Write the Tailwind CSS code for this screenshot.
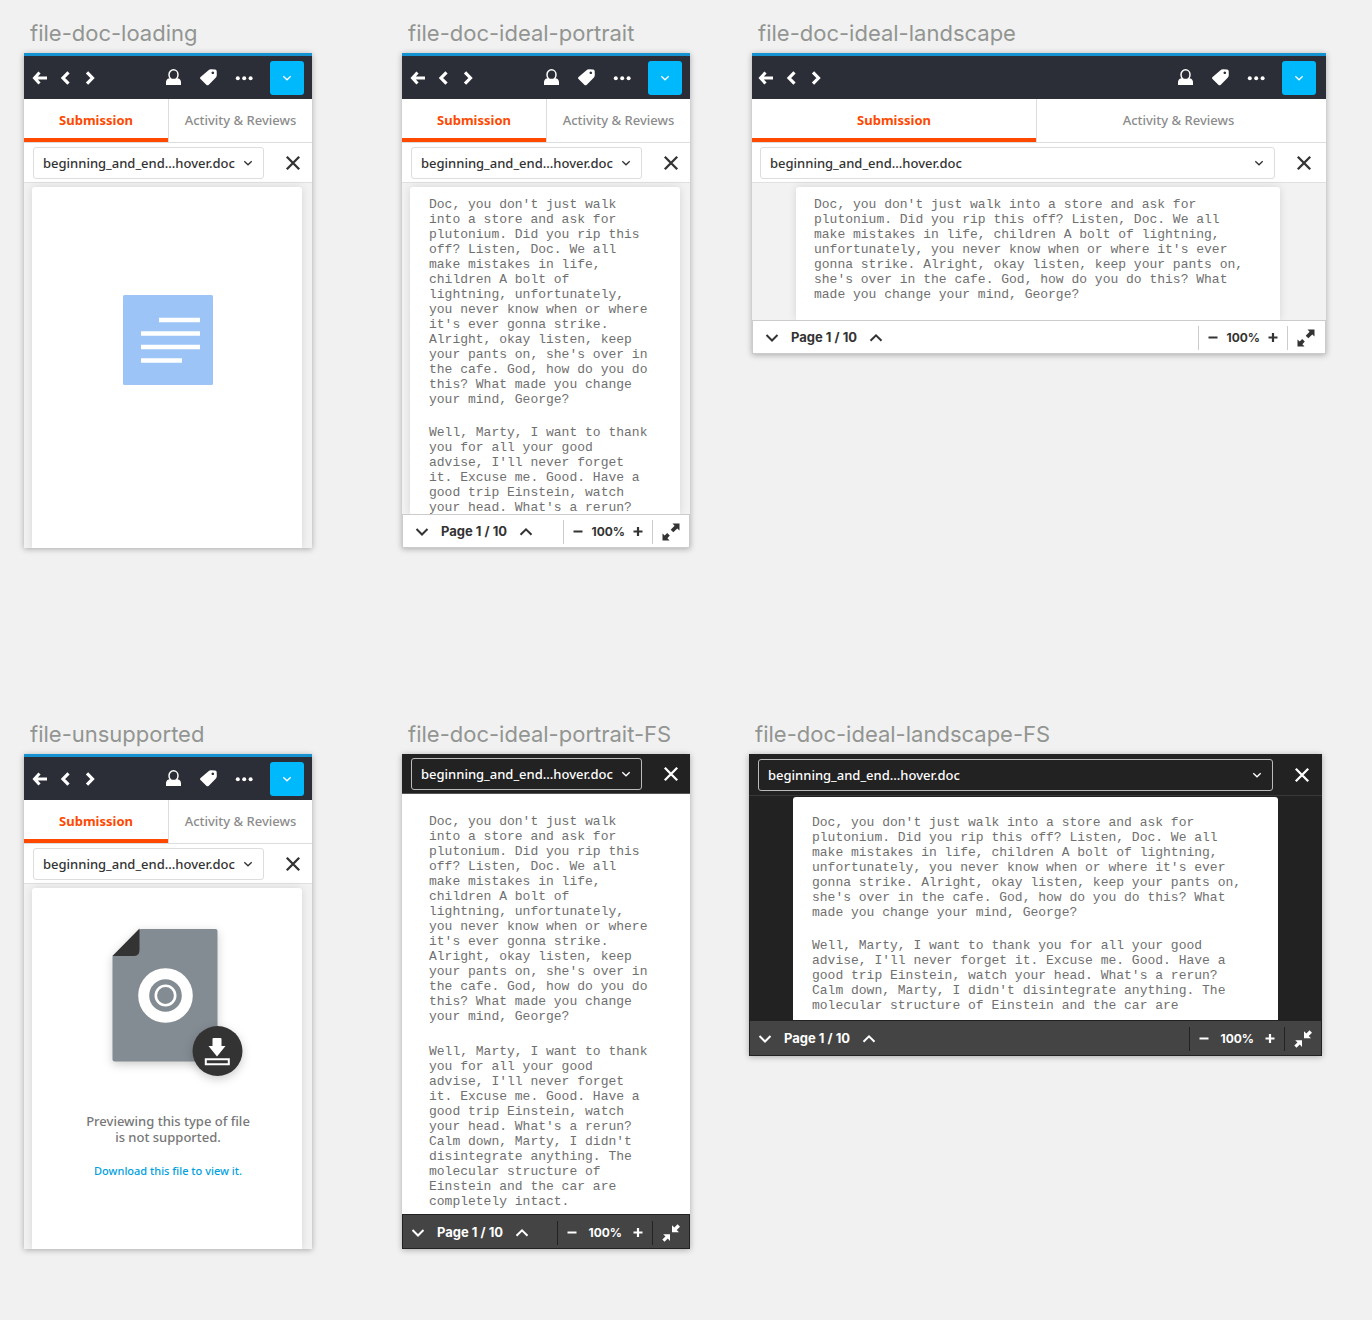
<!DOCTYPE html>
<html lang="en">
<head>
<meta charset="utf-8">
<meta name="viewport" content="width=device-width, initial-scale=1">
<title>Document viewer states</title>
<script src="https://cdn.jsdelivr.net/npm/@tailwindcss/browser@4"></script>
</head>
<body class="min-h-screen bg-[#f1f1f1] pt-5 pb-10 font-['Noto_Sans',sans-serif] text-[13px] text-[#333]">

<!-- Shared icons -->
<svg class="hidden" aria-hidden="true">
  <symbol id="back" viewBox="0 0 16 16"><path d="M7.5 2.5 2.5 8l5 5.500M3 8h12" fill="none" stroke="currentColor" stroke-width="3"/></symbol>
  <symbol id="prev" viewBox="0 0 16 16"><path d="M11.500 2.300 6 8l5.500 5.700" fill="none" stroke="currentColor" stroke-width="3.200"/></symbol>
  <symbol id="next" viewBox="0 0 16 16"><path d="M5 2.300 10.500 8 5 13.700" fill="none" stroke="currentColor" stroke-width="3.200"/></symbol>
  <symbol id="person" viewBox="0 0 18 18"><path d="M8.500 9.500c2 0 4.500-.9 6.500 1 .8.8 1 1.900 1 3V16H1v-2.500c0-1.100.2-2.200 1-3 2-1.900 4.500-1 6.500-1Z" fill="currentColor"/><ellipse cx="8.500" cy="5.700" rx="4.500" ry="4.900" fill="#2b2d37" stroke="currentColor" stroke-width="1.500"/></symbol>
  <symbol id="tag" viewBox="0 0 18 18"><path fill-rule="evenodd" fill="currentColor" d="M8.200 1.500Q9.500.3 11 .3L15.100.5Q16.700.7 16.700 2.200L16.800 6Q16.800 7.500 15.700 8.700L8.800 15.700Q7.500 16.800 6.300 15.700L.5 10.100Q-.5 9 .6 8.100ZM12.800 2.500a1.300 1.300 0 1 0 .01 0Z"/></symbol>
  <symbol id="dots" viewBox="0 0 18 18"><g fill="currentColor"><circle cx="2.800" cy="9.300" r="2"/><circle cx="9.200" cy="9.300" r="2"/><circle cx="15.600" cy="9.300" r="2"/></g></symbol>
  <symbol id="caret" viewBox="0 0 10 10"><path d="M1.300 3.200 5 6.800l3.700-3.600" fill="none" stroke="currentColor" stroke-width="1.300"/></symbol>
  <symbol id="close" viewBox="0 0 16 16"><path d="m1.800 1.800 12.400 12.400M14.200 1.800 1.800 14.200" fill="none" stroke="currentColor" stroke-width="2.300"/></symbol>
  <symbol id="down" viewBox="0 0 14 14"><path d="m1.500 4 5.500 5.500L12.500 4" fill="none" stroke="currentColor" stroke-width="2"/></symbol>
  <symbol id="up" viewBox="0 0 14 14"><path d="M1.500 9.800 7 4.300l5.500 5.500" fill="none" stroke="currentColor" stroke-width="2"/></symbol>
  <symbol id="minus" viewBox="0 0 12 12"><path d="M1.500 5.500h9" stroke="currentColor" stroke-width="2"/></symbol>
  <symbol id="plus" viewBox="0 0 12 12"><path d="M1.500 5.500h9M6 1v9" stroke="currentColor" stroke-width="2.200"/></symbol>
  <symbol id="expand" viewBox="0 0 18 18"><path fill="currentColor" d="M10.500.5h7V7.500l-2.200-1.900-4 3.700-2.600-2.600 3.900-3.900ZM7.500 17.500H.5v-7l2.200 1.900L5.200 10l2.600 2.600-2.400 2.600Z"/></symbol>
  <symbol id="collapse" viewBox="0 0 18 18"><path fill="currentColor" d="M10 1.200v7h7L14.700 6 18 2.700 15.600.3l-3.300 3.200ZM8 10.200H1.200l2.300 2.200-3.200 3.200 2.200 2.200 3.300-3.200L8 17Z"/></symbol>
</svg>

<main class="flex flex-col gap-[173px]">

<!-- Default views -->
<div class="flex items-start pl-6 pr-[46px]">

  <section class="w-72 shrink-0">
    <h2 class="mb-[7px] pl-1.5 font-[Inter,sans-serif] text-[22px] leading-[26px] whitespace-nowrap text-[#929591]">file-doc-loading</h2>
    <div class="flex h-[495px] flex-col overflow-hidden bg-[#f2f2f2] shadow-[0_1px_6px_rgba(0,0,0,0.3)]">
      <header class="flex h-[46px] shrink-0 items-center justify-between border-t-3 border-[#1593d0] bg-[#2b2d37] px-2 text-white">
        <nav class="flex items-center gap-[9px]">
          <button aria-label="Back"><svg class="size-4"><use href="#back"/></svg></button>
          <button aria-label="Previous"><svg class="size-4"><use href="#prev"/></svg></button>
          <button aria-label="Next"><svg class="size-4"><use href="#next"/></svg></button>
        </nav>
        <div class="flex items-center gap-[17px]">
          <button aria-label="Student"><svg class="size-[18px]"><use href="#person"/></svg></button>
          <button aria-label="Tags"><svg class="size-[18px]"><use href="#tag"/></svg></button>
          <button aria-label="More"><svg class="size-[18px]"><use href="#dots"/></svg></button>
          <button aria-label="Open panel" class="flex size-[34px] items-center justify-center rounded-[3px] bg-[#00b8fc]"><svg class="size-2.5"><use href="#caret"/></svg></button>
        </div>
      </header>
      <div class="grid h-11 shrink-0 grid-cols-2 border-b border-[#ddd] bg-white">
        <button class="border-b-4 border-[#ff4800] pt-1 font-bold text-[#ff4800]">Submission</button>
        <button class="border-l border-[#ddd] font-medium text-[#8c8c8c]">Activity &amp; Reviews</button>
      </div>
      <div class="flex h-10 shrink-0 items-center border-b border-[#e0e0e0] bg-white pr-[11px] pl-[9px]">
        <div class="relative mr-[21px] flex-1">
          <select aria-label="File" class="block h-8 w-full appearance-none rounded-[3px] border border-[#ddd] bg-transparent pt-[3px] pl-[9px] font-medium"><option>beginning_and_end...hover.doc</option></select>
          <svg class="pointer-events-none absolute top-[11px] right-[11px] size-2.5"><use href="#caret"/></svg>
        </div>
        <button aria-label="Close"><svg class="size-4"><use href="#close"/></svg></button>
      </div>
      <div class="mt-1 mr-[10px] ml-2 flex flex-1 justify-center rounded-t-[3px] bg-white pt-[108px] pl-0.5 shadow-[0_0_8px_rgba(0,0,0,0.12)]">
        <svg class="size-[90px]" viewBox="0 0 90 90" role="img" aria-label="Loading document"><rect width="90" height="90" rx="1.500" fill="#9dc4f7"/><path d="M36 25h41M18 38.500h59M18 52h59M18 65.500h41" stroke="#fff" stroke-width="4.500"/></svg>
      </div>
    </div>
  </section>

  <section class="ml-[90px] w-72 shrink-0">
    <h2 class="mb-[7px] pl-1.5 font-[Inter,sans-serif] text-[22px] leading-[26px] whitespace-nowrap text-[#929591]">file-doc-ideal-portrait</h2>
    <div class="flex h-[495px] flex-col overflow-hidden bg-[#f2f2f2] shadow-[0_1px_6px_rgba(0,0,0,0.3)]">
      <header class="flex h-[46px] shrink-0 items-center justify-between border-t-3 border-[#1593d0] bg-[#2b2d37] px-2 text-white">
        <nav class="flex items-center gap-[9px]">
          <button aria-label="Back"><svg class="size-4"><use href="#back"/></svg></button>
          <button aria-label="Previous"><svg class="size-4"><use href="#prev"/></svg></button>
          <button aria-label="Next"><svg class="size-4"><use href="#next"/></svg></button>
        </nav>
        <div class="flex items-center gap-[17px]">
          <button aria-label="Student"><svg class="size-[18px]"><use href="#person"/></svg></button>
          <button aria-label="Tags"><svg class="size-[18px]"><use href="#tag"/></svg></button>
          <button aria-label="More"><svg class="size-[18px]"><use href="#dots"/></svg></button>
          <button aria-label="Open panel" class="flex size-[34px] items-center justify-center rounded-[3px] bg-[#00b8fc]"><svg class="size-2.5"><use href="#caret"/></svg></button>
        </div>
      </header>
      <div class="grid h-11 shrink-0 grid-cols-2 border-b border-[#ddd] bg-white">
        <button class="border-b-4 border-[#ff4800] pt-1 font-bold text-[#ff4800]">Submission</button>
        <button class="border-l border-[#ddd] font-medium text-[#8c8c8c]">Activity &amp; Reviews</button>
      </div>
      <div class="flex h-10 shrink-0 items-center border-b border-[#e0e0e0] bg-white pr-[11px] pl-[9px]">
        <div class="relative mr-[21px] flex-1">
          <select aria-label="File" class="block h-8 w-full appearance-none rounded-[3px] border border-[#ddd] bg-transparent pt-[3px] pl-[9px] font-medium"><option>beginning_and_end...hover.doc</option></select>
          <svg class="pointer-events-none absolute top-[11px] right-[11px] size-2.5"><use href="#caret"/></svg>
        </div>
        <button aria-label="Close"><svg class="size-4"><use href="#close"/></svg></button>
      </div>
      <article class="mt-1 mr-[10px] ml-2 min-h-0 flex-1 overflow-hidden rounded-t-[3px] bg-white pt-2.5 pl-[19px] font-['Liberation_Mono',monospace] leading-[15px] text-[#707070] shadow-[0_0_8px_rgba(0,0,0,0.12)]">
        <p>Doc, you don't just walk<br>into a store and ask for<br>plutonium. Did you rip this<br>off? Listen, Doc. We all<br>make mistakes in life,<br>children A bolt of<br>lightning, unfortunately,<br>you never know when or where<br>it's ever gonna strike.<br>Alright, okay listen, keep<br>your pants on, she's over in<br>the cafe. God, how do you do<br>this? What made you change<br>your mind, George?</p>
        <p class="mt-[18px]">Well, Marty, I want to thank<br>you for all your good<br>advise, I'll never forget<br>it. Excuse me. Good. Have a<br>good trip Einstein, watch<br>your head. What's a rerun?</p>
      </article>
      <footer class="flex h-[34px] shrink-0 items-center justify-between border border-[#ccc] bg-white pt-0.5 pr-[9px] pl-3 font-[Inter,sans-serif] font-bold">
        <div class="flex items-center gap-3">
          <button aria-label="Next page"><svg class="size-3.5"><use href="#down"/></svg></button>
          <span>Page 1 / 10</span>
          <button aria-label="Previous page"><svg class="size-3.5"><use href="#up"/></svg></button>
        </div>
        <div class="flex items-center">
          <div class="flex h-6 items-center gap-[7px] border-x border-[#ccc] px-2">
            <button aria-label="Zoom out"><svg class="size-3"><use href="#minus"/></svg></button>
            <span class="text-[12px]">100%</span>
            <button aria-label="Zoom in"><svg class="size-3"><use href="#plus"/></svg></button>
          </div>
          <button aria-label="Full screen" class="ml-[9px]"><svg class="size-[18px]"><use href="#expand"/></svg></button>
        </div>
      </footer>
    </div>
  </section>

  <section class="ml-[62px] min-w-0 flex-1">
    <h2 class="mb-[7px] pl-1.5 font-[Inter,sans-serif] text-[22px] leading-[26px] whitespace-nowrap text-[#929591]">file-doc-ideal-landscape</h2>
    <div class="flex h-[301px] flex-col overflow-hidden bg-[#f2f2f2] shadow-[0_1px_6px_rgba(0,0,0,0.3)]">
      <header class="flex h-[46px] shrink-0 items-center justify-between border-t-3 border-[#1593d0] bg-[#2b2d37] pr-[10px] pl-1.5 text-white">
        <nav class="flex items-center gap-[9px]">
          <button aria-label="Back"><svg class="size-4"><use href="#back"/></svg></button>
          <button aria-label="Previous"><svg class="size-4"><use href="#prev"/></svg></button>
          <button aria-label="Next"><svg class="size-4"><use href="#next"/></svg></button>
        </nav>
        <div class="flex items-center gap-[17px]">
          <button aria-label="Student"><svg class="size-[18px]"><use href="#person"/></svg></button>
          <button aria-label="Tags"><svg class="size-[18px]"><use href="#tag"/></svg></button>
          <button aria-label="More"><svg class="size-[18px]"><use href="#dots"/></svg></button>
          <button aria-label="Open panel" class="flex size-[34px] items-center justify-center rounded-[3px] bg-[#00b8fc]"><svg class="size-2.5"><use href="#caret"/></svg></button>
        </div>
      </header>
      <div class="grid h-11 shrink-0 grid-cols-[284fr_290fr] border-b border-[#ddd] bg-white">
        <button class="border-b-4 border-[#ff4800] pt-1 font-bold text-[#ff4800]">Submission</button>
        <button class="border-l border-[#ddd] pr-1.5 font-medium text-[#8c8c8c]">Activity &amp; Reviews</button>
      </div>
      <div class="flex h-10 shrink-0 items-center border-b border-[#e0e0e0] bg-white pr-[14px] pl-2">
        <div class="relative mr-[21px] flex-1">
          <select aria-label="File" class="block h-8 w-full appearance-none rounded-[3px] border border-[#ddd] bg-transparent pt-[3px] pl-[9px] font-medium"><option>beginning_and_end...hover.doc</option></select>
          <svg class="pointer-events-none absolute top-[11px] right-[11px] size-2.5"><use href="#caret"/></svg>
        </div>
        <button aria-label="Close"><svg class="size-4"><use href="#close"/></svg></button>
      </div>
      <article class="mt-1 mr-[46px] ml-11 min-h-0 flex-1 overflow-hidden rounded-t-[3px] bg-white pt-2.5 pl-[18px] font-['Liberation_Mono',monospace] leading-[15px] text-[#707070] shadow-[0_0_8px_rgba(0,0,0,0.12)]">
        <p>Doc, you don't just walk into a store and ask for<br>plutonium. Did you rip this off? Listen, Doc. We all<br>make mistakes in life, children A bolt of lightning,<br>unfortunately, you never know when or where it's ever<br>gonna strike. Alright, okay listen, keep your pants on,<br>she's over in the cafe. God, how do you do this? What<br>made you change your mind, George?</p>
      </article>
      <footer class="flex h-[34px] shrink-0 items-center justify-between border border-[#ccc] bg-white pt-0.5 pr-[10px] pl-3 font-[Inter,sans-serif] font-bold">
        <div class="flex items-center gap-3">
          <button aria-label="Next page"><svg class="size-3.5"><use href="#down"/></svg></button>
          <span>Page 1 / 10</span>
          <button aria-label="Previous page"><svg class="size-3.5"><use href="#up"/></svg></button>
        </div>
        <div class="flex items-center">
          <div class="flex h-6 items-center gap-[7px] border-x border-[#ccc] px-2">
            <button aria-label="Zoom out"><svg class="size-3"><use href="#minus"/></svg></button>
            <span class="text-[12px]">100%</span>
            <button aria-label="Zoom in"><svg class="size-3"><use href="#plus"/></svg></button>
          </div>
          <button aria-label="Full screen" class="ml-[9px]"><svg class="size-[18px]"><use href="#expand"/></svg></button>
        </div>
      </footer>
    </div>
  </section>
</div>

<!-- Unsupported file and full-screen views -->
<div class="flex items-start pl-6 pr-[50px]">

  <section class="w-72 shrink-0">
    <h2 class="mb-[7px] pl-1.5 font-[Inter,sans-serif] text-[22px] leading-[26px] whitespace-nowrap text-[#929591]">file-unsupported</h2>
    <div class="flex h-[495px] flex-col overflow-hidden bg-[#f2f2f2] shadow-[0_1px_6px_rgba(0,0,0,0.3)]">
      <header class="flex h-[46px] shrink-0 items-center justify-between border-t-3 border-[#1593d0] bg-[#2b2d37] px-2 text-white">
        <nav class="flex items-center gap-[9px]">
          <button aria-label="Back"><svg class="size-4"><use href="#back"/></svg></button>
          <button aria-label="Previous"><svg class="size-4"><use href="#prev"/></svg></button>
          <button aria-label="Next"><svg class="size-4"><use href="#next"/></svg></button>
        </nav>
        <div class="flex items-center gap-[17px]">
          <button aria-label="Student"><svg class="size-[18px]"><use href="#person"/></svg></button>
          <button aria-label="Tags"><svg class="size-[18px]"><use href="#tag"/></svg></button>
          <button aria-label="More"><svg class="size-[18px]"><use href="#dots"/></svg></button>
          <button aria-label="Open panel" class="flex size-[34px] items-center justify-center rounded-[3px] bg-[#00b8fc]"><svg class="size-2.5"><use href="#caret"/></svg></button>
        </div>
      </header>
      <div class="grid h-11 shrink-0 grid-cols-2 border-b border-[#ddd] bg-white">
        <button class="border-b-4 border-[#ff4800] pt-1 font-bold text-[#ff4800]">Submission</button>
        <button class="border-l border-[#ddd] font-medium text-[#8c8c8c]">Activity &amp; Reviews</button>
      </div>
      <div class="flex h-10 shrink-0 items-center border-b border-[#e0e0e0] bg-white pr-[11px] pl-[9px]">
        <div class="relative mr-[21px] flex-1">
          <select aria-label="File" class="block h-8 w-full appearance-none rounded-[3px] border border-[#ddd] bg-transparent pt-[3px] pl-[9px] font-medium"><option>beginning_and_end...hover.doc</option></select>
          <svg class="pointer-events-none absolute top-[11px] right-[11px] size-2.5"><use href="#caret"/></svg>
        </div>
        <button aria-label="Close"><svg class="size-4"><use href="#close"/></svg></button>
      </div>
      <div class="mt-1 mr-[10px] ml-2 flex flex-1 flex-col items-center rounded-t-[3px] bg-white pt-10 pl-0.5 text-center shadow-[0_0_8px_rgba(0,0,0,0.12)]">
        <svg class="ml-[18px] h-[148px] w-[131px] overflow-visible" viewBox="0 0 131 148" role="img" aria-label="Unsupported file">
          <g class="drop-shadow-[0_3px_5px_rgba(0,0,0,0.2)]">
            <path d="M27.500 1.500 29 1h74.500q2 0 2 2v128.500q0 2-2 2H2.500q-2 0-2-2V28Z" fill="#848c93"/>
            <path d="M.5 28 27.500.5V22q0 6-6 6Z" fill="#333"/>
          </g>
          <circle cx="53.500" cy="67.500" r="21.800" fill="none" stroke="#fff" stroke-width="11"/>
          <circle cx="53.500" cy="67.500" r="9.700" fill="none" stroke="#fff" stroke-width="2.600"/>
          <g class="drop-shadow-[0_3px_5px_rgba(0,0,0,0.2)]"><circle cx="105.500" cy="123" r="25" fill="#333"/></g>
          <path d="M100.500 111q0-1 1-1h7q1 0 1 1v7h4l-8.500 10.500L96.500 118h4Z" fill="#fff"/>
          <path d="M93.800 131.300h23v5h-23Z" fill="none" stroke="#fff" stroke-width="2"/>
        </svg>
        <p class="mt-[37px] leading-4 font-medium text-[#777]">Previewing this type of file<br>is not supported.</p>
        <a href="#" class="mt-[18px] text-[11px] leading-4 font-medium text-[#009fe0]">Download this file to view it.</a>
      </div>
    </div>
  </section>

  <section class="ml-[90px] w-72 shrink-0">
    <h2 class="mb-[7px] pl-1.5 font-[Inter,sans-serif] text-[22px] leading-[26px] whitespace-nowrap text-[#929591]">file-doc-ideal-portrait-FS</h2>
    <div class="flex h-[495px] flex-col overflow-hidden bg-white shadow-[0_1px_6px_rgba(0,0,0,0.3)]">
      <div class="flex h-10 shrink-0 items-center border-b border-[#555] bg-[#222] pr-[11px] pl-[9px] text-white">
        <div class="relative mr-[21px] flex-1">
          <select aria-label="File" class="block h-8 w-full appearance-none rounded-[3px] border border-[#bbb] bg-transparent pt-[3px] pl-[9px] font-medium"><option>beginning_and_end...hover.doc</option></select>
          <svg class="pointer-events-none absolute top-[11px] right-[11px] size-2.5"><use href="#caret"/></svg>
        </div>
        <button aria-label="Close"><svg class="size-4"><use href="#close"/></svg></button>
      </div>
      <article class="min-h-0 flex-1 overflow-hidden pt-5 pl-[27px] font-['Liberation_Mono',monospace] leading-[15px] text-[#707070]">
        <p>Doc, you don't just walk<br>into a store and ask for<br>plutonium. Did you rip this<br>off? Listen, Doc. We all<br>make mistakes in life,<br>children A bolt of<br>lightning, unfortunately,<br>you never know when or where<br>it's ever gonna strike.<br>Alright, okay listen, keep<br>your pants on, she's over in<br>the cafe. God, how do you do<br>this? What made you change<br>your mind, George?</p>
        <p class="mt-5">Well, Marty, I want to thank<br>you for all your good<br>advise, I'll never forget<br>it. Excuse me. Good. Have a<br>good trip Einstein, watch<br>your head. What's a rerun?<br>Calm down, Marty, I didn't<br>disintegrate anything. The<br>molecular structure of<br>Einstein and the car are<br>completely intact.</p>
      </article>
      <footer class="flex h-[35px] shrink-0 items-center justify-between border border-[#222] bg-[#444] pt-0.5 pr-[9px] pl-2 font-[Inter,sans-serif] font-bold text-white">
        <div class="flex items-center gap-3">
          <button aria-label="Next page"><svg class="size-3.5"><use href="#down"/></svg></button>
          <span>Page 1 / 10</span>
          <button aria-label="Previous page"><svg class="size-3.5"><use href="#up"/></svg></button>
        </div>
        <div class="flex items-center">
          <div class="flex h-6 items-center gap-[10px] border-x border-[#222] px-2">
            <button aria-label="Zoom out"><svg class="size-3"><use href="#minus"/></svg></button>
            <span class="text-[12px]">100%</span>
            <button aria-label="Zoom in"><svg class="size-3"><use href="#plus"/></svg></button>
          </div>
          <button aria-label="Exit full screen" class="ml-[9px]"><svg class="size-[18px]"><use href="#collapse"/></svg></button>
        </div>
      </footer>
    </div>
  </section>

  <section class="ml-[59px] min-w-0 flex-1">
    <h2 class="mb-[7px] pl-1.5 font-[Inter,sans-serif] text-[22px] leading-[26px] whitespace-nowrap text-[#929591]">file-doc-ideal-landscape-FS</h2>
    <div class="flex h-[302px] flex-col overflow-hidden bg-[#222] shadow-[0_1px_6px_rgba(0,0,0,0.3)]">
      <div class="flex h-[42px] shrink-0 items-center border-b border-[#383838] pr-3 pl-[9px] text-white">
        <div class="relative mr-[21px] flex-1">
          <select aria-label="File" class="block h-8 w-full appearance-none rounded-[3px] border border-[#bbb] bg-transparent pt-[3px] pl-[9px] font-medium"><option>beginning_and_end...hover.doc</option></select>
          <svg class="pointer-events-none absolute top-[11px] right-[11px] size-2.5"><use href="#caret"/></svg>
        </div>
        <button aria-label="Close"><svg class="size-4"><use href="#close"/></svg></button>
      </div>
      <article class="mx-11 mt-px min-h-0 flex-1 overflow-hidden rounded-t-[3px] bg-white pt-[18px] pl-[19px] font-['Liberation_Mono',monospace] leading-[15px] text-[#707070]">
        <p>Doc, you don't just walk into a store and ask for<br>plutonium. Did you rip this off? Listen, Doc. We all<br>make mistakes in life, children A bolt of lightning,<br>unfortunately, you never know when or where it's ever<br>gonna strike. Alright, okay listen, keep your pants on,<br>she's over in the cafe. God, how do you do this? What<br>made you change your mind, George?</p>
        <p class="mt-[18px]">Well, Marty, I want to thank you for all your good<br>advise, I'll never forget it. Excuse me. Good. Have a<br>good trip Einstein, watch your head. What's a rerun?<br>Calm down, Marty, I didn't disintegrate anything. The<br>molecular structure of Einstein and the car are</p>
      </article>
      <footer class="flex h-9 shrink-0 items-center justify-between border border-[#222] bg-[#444] pt-0.5 pr-[9px] pl-2 font-[Inter,sans-serif] font-bold text-white">
        <div class="flex items-center gap-3">
          <button aria-label="Next page"><svg class="size-3.5"><use href="#down"/></svg></button>
          <span>Page 1 / 10</span>
          <button aria-label="Previous page"><svg class="size-3.5"><use href="#up"/></svg></button>
        </div>
        <div class="flex items-center">
          <div class="flex h-6 items-center gap-[10px] border-x border-[#222] px-2">
            <button aria-label="Zoom out"><svg class="size-3"><use href="#minus"/></svg></button>
            <span class="text-[12px]">100%</span>
            <button aria-label="Zoom in"><svg class="size-3"><use href="#plus"/></svg></button>
          </div>
          <button aria-label="Exit full screen" class="ml-[9px]"><svg class="size-[18px]"><use href="#collapse"/></svg></button>
        </div>
      </footer>
    </div>
  </section>
</div>
</main>
</body>
</html>
